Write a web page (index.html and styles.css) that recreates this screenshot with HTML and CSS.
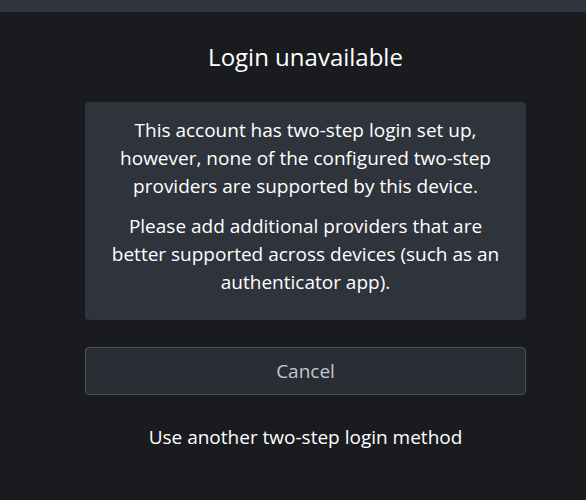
FILE: index.html
```html
<!DOCTYPE html>
<html>

<head>
  <title>Login unavailable</title>
  <link rel="stylesheet" href="styles.css">
</head>

<body>
  <div class="topbar"></div>

  <div class="dialog">
    <h1 class="title">Login unavailable</h1>

    <div class="notice">
      <p>This account has two-step login set up, however, none of the configured two-step providers are supported by this device.</p>
      <p>Please add additional providers that are better supported across devices (such as an authenticator app).</p>
    </div>

    <button class="cancel">Cancel</button>

    <a class="other" href="#">Use another two-step login method</a>
  </div>
</body>

</html>
```

FILE: styles.css
```css
html,
body {
  margin: 0;
  padding: 0;
  font-family: "Open Sans", sans-serif;
  color: #ffffff;
  background-color: #1a1b1f;
}

.topbar {
  height: 12px;
  background-color: #2f343d;
}

.dialog {
  width: 441px;
  margin: 0 auto;
  display: flex;
  flex-direction: column;
  align-items: stretch;
  padding-left: 25px;
}

.title {
  margin: 28px 0 0 0;
  font-size: 24px;
  font-weight: 400;
  line-height: 34px;
  text-align: center;
}

.notice {
  margin-top: 28px;
  background-color: #2f333b;
  border-radius: 4px;
  padding: 14px 20px 24px 20px;
  text-align: center;
  font-size: 19px;
  line-height: 28px;
}

.notice p {
  margin: 0;
}

.notice p + p {
  margin-top: 12px;
}

.cancel {
  margin-top: 27px;
  height: 48px;
  background-color: #2a2d33;
  border: 1px solid #4c5058;
  border-radius: 4px;
  color: #c3c7cf;
  font-family: "Open Sans", sans-serif;
  font-size: 19px;
}

.other {
  margin-top: 29px;
  text-align: center;
  color: #ffffff;
  font-size: 19px;
  line-height: 26px;
  text-decoration: none;
}
```
